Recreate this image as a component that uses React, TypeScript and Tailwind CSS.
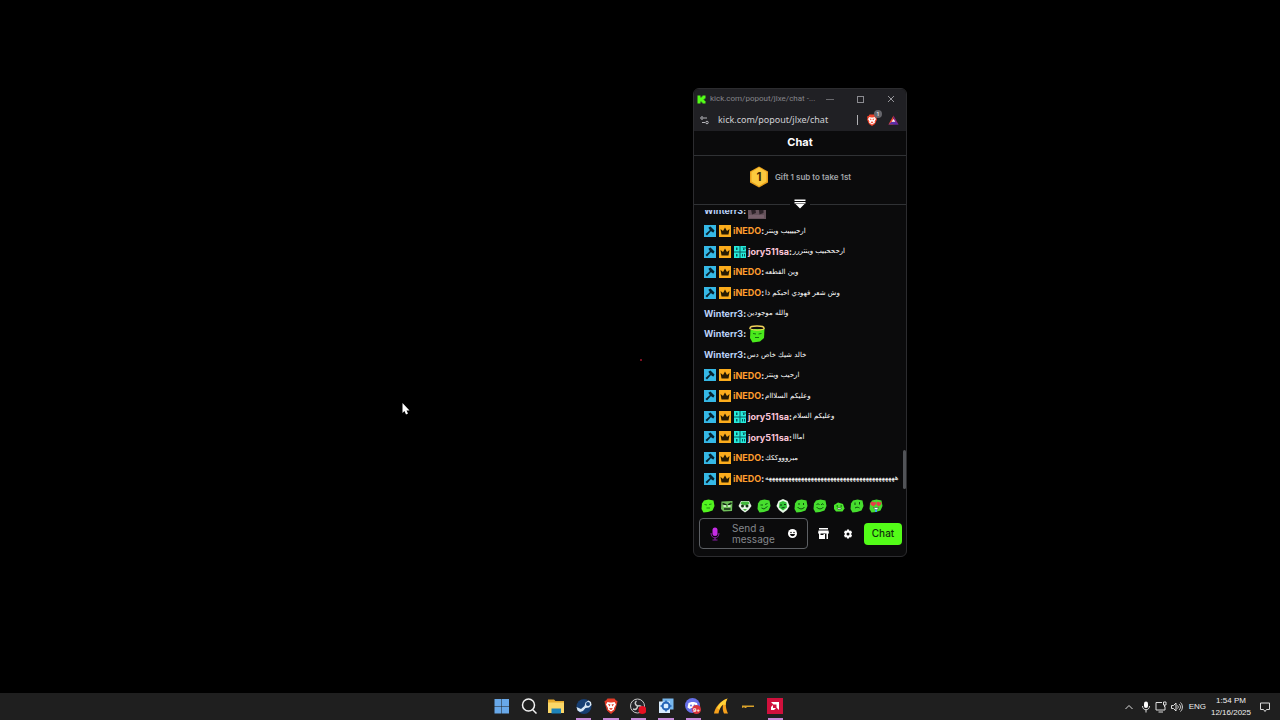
import React, { useState } from 'react';

type Badge = 'mod' | 'vip' | 'og';

type Message = {
  sender: string;
  color: string;
  badges: Badge[];
  text?: string;
  emote?: 'angel' | 'photo';
};

const staff: Badge[] = ['mod', 'vip'];
const staffOg: Badge[] = ['mod', 'vip', 'og'];

const messages: Message[] = [
  { sender: 'Winterr3', color: 'text-[#bcd3fb]', badges: [], emote: 'photo' },
  { sender: 'iNEDO', color: 'text-[#ff9d2e]', badges: staff, text: 'ارحييييب وينتر' },
  { sender: 'jory511sa', color: 'text-[#fbc5d8]', badges: staffOg, text: 'ارحححبيب وينتررر' },
  { sender: 'iNEDO', color: 'text-[#ff9d2e]', badges: staff, text: 'وين القطعه' },
  { sender: 'iNEDO', color: 'text-[#ff9d2e]', badges: staff, text: 'وش شعر فهودي احبكم ذا' },
  { sender: 'Winterr3', color: 'text-[#bcd3fb]', badges: [], text: 'والله موجودين' },
  { sender: 'Winterr3', color: 'text-[#bcd3fb]', badges: [], emote: 'angel' },
  { sender: 'Winterr3', color: 'text-[#bcd3fb]', badges: [], text: 'خالد شيك خاص دس' },
  { sender: 'iNEDO', color: 'text-[#ff9d2e]', badges: staff, text: 'ارحيب وينتر' },
  { sender: 'iNEDO', color: 'text-[#ff9d2e]', badges: staff, text: 'وعليكم السلااام' },
  { sender: 'jory511sa', color: 'text-[#fbc5d8]', badges: staffOg, text: 'وعليكم السلام' },
  { sender: 'jory511sa', color: 'text-[#fbc5d8]', badges: staffOg, text: 'امااا' },
  { sender: 'iNEDO', color: 'text-[#ff9d2e]', badges: staff, text: 'مبروووككك' },
  { sender: 'iNEDO', color: 'text-[#ff9d2e]', badges: staff, text: 'ههههههههههههههههههههههههههههههههههههههههه' },
];

const BadgeIcon: React.FC<{ kind: Badge }> = ({ kind }) => {
  if (kind === 'mod') {
    return (
      <svg viewBox="0 0 24 24" className="w-3 h-3 shrink-0">
        <rect width="24" height="24" fill="#35b8e6" />
        <path d="M9 5l4-2 8 8-2 4-3-1-2-2-8 9-3-3 9-8-2-2z" fill="#06222e" />
      </svg>
    );
  }
  if (kind === 'vip') {
    return (
      <svg viewBox="0 0 24 24" className="w-3 h-3 shrink-0">
        <rect width="24" height="24" fill="#fbac1c" />
        <path d="M3 8l5 4 4-7 4 7 5-4-2 11H5z" fill="#261a02" />
      </svg>
    );
  }
  return (
    <svg viewBox="0 0 24 24" className="w-3 h-3 shrink-0">
      <rect width="24" height="24" fill="#0a5a5c" />
      <path d="M0 0h11v11H0zM13 0h11v11H13zM0 13h11v11H0zM13 13h11v11H13z" fill="#25ebdb" />
      <path d="M4 3h3v5H4zM16 3h8v2h-6v3h3V6M4 16h3v5H4zM16 16h2v5h-2zM20 16h2v5h-2z" fill="#0a5a5c" />
    </svg>
  );
};

type Face = 'calm' | 'angry' | 'ghost' | 'wink' | 'phones' | 'smile' | 'happy' | 'small' | 'think' | 'love';

const faces: Face[] = ['calm', 'angry', 'ghost', 'wink', 'phones', 'smile', 'happy', 'small', 'think', 'love'];

const Emote: React.FC<{ face: Face }> = ({ face }) => (
  <svg viewBox="0 0 28 28" className="w-full h-full">
    {face === 'ghost' && (
      <>
        <path d="M6 4h16l5 10-6 8-7 5-7-5-6-8z" fill="#e9f5e9" />
        <path d="M7 5h14l2 5-9 3-9-3z" fill="#41b83a" />
        <circle cx="9" cy="14" r="3" fill="#123312" />
        <circle cx="18" cy="14" r="3" fill="#123312" />
        <path d="M10 20h8l-4 4z" fill="#41b83a" />
      </>
    )}
    {face === 'phones' && (
      <>
        <path d="M14 0l9 4 4 10-5 8-8 6-8-6-5-8 4-10z" fill="#e6f8e6" />
        <path d="M14 4l7 3 1 10-8 6-8-6 1-10z" fill="#31c336" />
        <path d="M8 12h4M16 11h4M11 18l6-1" stroke="#093b0b" strokeWidth="2" />
      </>
    )}
    {face === 'small' && (
      <>
        <path d="M4 12l8-5 10 3 3 9-4 6H8l-4-5z" fill="#4ae52c" />
        <path d="M9 14h3M17 14h3" stroke="#0b3c0a" strokeWidth="2" />
        <path d="M10 18h9l-2 3h-5z" fill="#fff" stroke="#0b3c0a" />
      </>
    )}
    {face === 'angry' && (
      <>
        <path d="M3 5l22-1-1 20-17 1-5-5z" fill="#6fbf5a" />
        <path d="M5 9l8 3M23 8l-7 4" stroke="#102411" strokeWidth="3" />
        <path d="M7 14h5M16 14h5" stroke="#eefbe9" strokeWidth="3" />
        <path d="M8 20h13" stroke="#102411" strokeWidth="3" />
      </>
    )}
    {['calm', 'wink', 'smile', 'happy', 'think', 'love'].includes(face) && (
      <path d="M6 3l9-2 10 2 2 11-4 9-9 3-9 1-4-7 1-11z" fill={face === 'calm' ? '#52f41f' : '#46de2e'} />
    )}
    {face === 'calm' && <path d="M7 11l5 1M16 11l5-1M11 18h7" stroke="#1a8c0e" strokeWidth="2" fill="none" />}
    {face === 'wink' && (
      <path d="M7 12h5M16 11l5-2M9 18l5 2 7-5" stroke="#0d5b0e" strokeWidth="2" fill="none" />
    )}
    {face === 'smile' && (
      <path d="M10 8v4M19 8v4M7 16c4 5 11 5 14 0" stroke="#0b4b0a" strokeWidth="2" fill="none" />
    )}
    {face === 'happy' && (
      <path d="M7 12l3-3 3 3M16 12l3-3 2 3M7 16c4 5 10 5 14 0" stroke="#0d5b0e" strokeWidth="2" fill="none" />
    )}
    {face === 'think' && (
      <path d="M10 7v5M19 6v5M10 18c3-2 6-2 9 0" stroke="#0b4b0a" strokeWidth="2" fill="none" />
    )}
    {face === 'love' && (
      <>
        <path d="M3 7l4-2 3 2 3-2 1 5-5 5-6-4zM15 7l3-2 3 2 4-1-1 5-5 4-4-4z" fill="#e93a47" />
        <path d="M9 17h10l-3 5-4-1z" fill="#fff" stroke="#333" />
        <path d="M12 21h4v5h-4z" fill="#39a9e8" />
      </>
    )}
  </svg>
);

const MessageEmote: React.FC<{ kind: 'angel' | 'photo' }> = ({ kind }) =>
  kind === 'angel' ? (
    <svg viewBox="0 0 36 36" className="w-[18px] h-[18px] ml-0.5">
      <path d="M5 8h28l-1 18-8 7-15 2-5-9z" fill="#4aea1c" />
      <path d="M4 8C3 3 9 2 18 2s15 1 14 6" fill="none" stroke="#f4d35a" strokeWidth="3" />
      <path d="M5 8c7 3 20 3 27 0" fill="none" stroke="#f4d35a" strokeWidth="2" />
      <path d="M10 17l6 1M21 18l6-1M14 25h8" stroke="#14720c" strokeWidth="2" />
    </svg>
  ) : (
    <svg viewBox="0 0 36 36" className="w-[18px] h-[18px] ml-0.5">
      <rect width="36" height="36" fill="#65525b" />
      <path d="M4 6h9l3 18-8 3zM20 5h11v19l-8 3z" fill="#2c2228" />
      <path d="M2 28h30v6H2z" fill="#77606b" />
    </svg>
  );

const ChatLine: React.FC<{ msg: Message }> = ({ msg }) => (
  <li className="flex items-center whitespace-nowrap text-[9px]">
    {msg.badges.length > 0 && (
      <span className="flex gap-[3px] mr-0.5">
        {msg.badges.map((b) => (
          <BadgeIcon key={b} kind={b} />
        ))}
      </span>
    )}
    <span className={`font-bold ${msg.color}`}>{msg.sender}</span>
    <span className="font-semibold text-white">:</span>
    {msg.text && (
      <span dir="rtl" className="ml-px text-[7px] text-white font-['DejaVu_Sans',sans-serif]">
        {msg.text}
      </span>
    )}
    {msg.emote && <MessageEmote kind={msg.emote} />}
  </li>
);

const BraveIcon: React.FC<{ className: string }> = ({ className }) => (
  <svg viewBox="0 0 24 24" className={className}>
    <path d="M7 1h10l2 3 3 1-1 4 1 2-4 9-6 4-6-4-4-9 1-2-1-4 3-1z" fill="#f1442b" />
    <path d="M7 6l3 1h4l3-1 3 4-3 5 1 2-6 4-6-4 1-2-3-5z" fill="#fff" />
    <path d="M7 9l4 1-1 3zM17 9l-4 1 1 3zM9 16l3-1 3 1-3 3z" fill="#f1442b" />
  </svg>
);

const PopoutWindow = () => {
  const [draft, setDraft] = useState('');

  return (
    <section className="absolute left-[693px] top-[88px] w-[214px] h-[469px] flex flex-col rounded-md border border-[#2c2c2f] bg-[#0b0b0c] overflow-hidden font-['Inter',sans-serif]">
      <header className="shrink-0 bg-[#202024]">
        <div className="h-5 flex items-center pl-[3px] text-[8px] text-[#85858a] font-['Roboto',sans-serif]">
          <svg viewBox="0 0 18 18" className="w-[9px] h-[9px] mr-1 shrink-0">
            <path d="M1 1h6v4h2V3h2V1h6v6h-2v2h-2v1h2v2h2v5h-6v-2H9v-2H7v4H1z" fill="#53fc18" />
          </svg>
          <span className="flex-1 whitespace-nowrap">kick.com/popout/jlxe/chat -...</span>
          <div className="flex">
            <button aria-label="Minimize" className="w-[30px] h-5 flex items-center justify-center">
              <span className="w-2 h-px bg-[#6a6a6e]" />
            </button>
            <button aria-label="Maximize" className="w-[31px] h-5 flex items-center justify-center">
              <span className="w-[7px] h-[7px] border border-[#8b8b90]" />
            </button>
            <button aria-label="Close" className="w-[30px] h-5 flex items-center justify-center">
              <svg viewBox="0 0 8 8" className="w-2 h-2">
                <path d="M1 1l6 6M7 1L1 7" stroke="#96969b" />
              </svg>
            </button>
          </div>
        </div>
        <div className="h-[22px] flex items-center px-1.5 text-[9px] text-[#d0d0d4] font-['Noto_Sans',sans-serif]">
          <svg viewBox="0 0 18 18" className="w-[9px] h-[9px] mr-[9px] shrink-0" fill="none" stroke="#b5b5ba" strokeWidth="2">
            <circle cx="4" cy="4" r="2.5" />
            <path d="M8 4h6M4 13h6" />
            <circle cx="14" cy="13" r="2.5" />
          </svg>
          <span className="flex-1">kick.com/popout/jlxe/chat</span>
          <span className="w-px h-2.5 mr-2 bg-[#b0b0b4]" />
          <span className="relative mr-2.5">
            <BraveIcon className="w-3 h-3" />
            <span className="absolute -top-1 -right-1 w-2 h-2 rounded-full bg-[#66666c] text-[6px] leading-2 text-center text-white">
              1
            </span>
          </span>
          <svg viewBox="0 0 24 22" className="w-[11px] h-2.5 mr-px">
            <path d="M12 1L1 21h11z" fill="#f5482c" />
            <path d="M12 1l11 20H12z" fill="#8a2384" />
            <path d="M1 21h22l-7-6H8z" fill="#5a2fa8" />
            <path d="M12 9l4 6H8z" fill="#fff" />
          </svg>
        </div>
      </header>

      <h1 className="shrink-0 h-[25px] flex items-center justify-center pb-0.5 border-b border-[#303235] text-[11px] font-bold text-white">
        Chat
      </h1>

      <div className="relative shrink-0 h-[49px] flex items-center justify-center gap-1.5 pb-1.5 border-b border-[#303235]">
        <svg viewBox="0 0 40 44" className="w-5 h-[22px]">
          <path d="M20 1l18 10v22L20 43 2 33V11z" fill="#e9a01c" />
          <path d="M20 3l15 9v19l-15 9-15-9V12z" fill="#fbc93e" />
          <text x="20" y="30" textAnchor="middle" fontSize="23" fontWeight="700" fill="#3f2a06">
            1
          </text>
        </svg>
        <span className="text-[8px] font-semibold text-[#a3a6aa]">Gift 1 sub to take 1st</span>
        <button
          aria-label="Expand leaderboard"
          className="absolute -bottom-1.5 left-1/2 -translate-x-1/2 w-5 h-3 flex items-center justify-center bg-[#0b0b0c]"
        >
          <svg viewBox="0 0 24 20" className="w-3 h-2.5" fill="#fff">
            <path d="M1 1h22v3H1zM1 6h22v3H1zM3 10h18l-9 9z" />
          </svg>
        </button>
      </div>

      <div className="flex-1 min-h-0 mt-[5px] relative flex flex-col justify-end overflow-hidden">
        <ul className="shrink-0 h-[289px] grid auto-rows-fr pl-2.5">
          {messages.map((msg, idx) => (
            <ChatLine key={idx} msg={msg} />
          ))}
        </ul>
        <div className="absolute right-0 bottom-0 w-[3px] h-[39px] rounded-sm bg-[#515357]" />
      </div>

      <footer className="shrink-0 pt-2 pl-[5px] pr-1 pb-[7px]">
        <div className="w-[184px] flex justify-between pl-0.5">
          {faces.map((face) => (
            <button key={face} aria-label={face} className="w-3.5 h-[18px] py-0.5">
              <Emote face={face} />
            </button>
          ))}
        </div>
        <form className="mt-[3px] flex items-center" onSubmit={(e) => e.preventDefault()}>
          <div className="w-[109px] h-[31px] flex items-center px-2.5 rounded-sm border border-[#5d6064]">
            <svg viewBox="0 0 20 28" className="w-2.5 h-3.5 mr-3 shrink-0">
              <rect x="5" y="1" width="10" height="17" rx="5" fill="#c72ce6" />
              <path d="M2 12c0 13 16 13 16 0M10 21v5M5 26h10" fill="none" stroke="#8a1fa5" strokeWidth="2" />
            </svg>
            <textarea
              aria-label="Send a message"
              placeholder="Send a message"
              value={draft}
              onChange={(e) => setDraft(e.target.value)}
              rows={2}
              className="flex-1 min-w-0 h-[22px] resize-none overflow-hidden bg-transparent text-[10px] leading-[11px] text-white placeholder:text-[#85888c] outline-none"
            />
            <button type="button" aria-label="Emotes" className="ml-1 shrink-0">
              <svg viewBox="0 0 18 18" className="w-[9px] h-[9px] block">
                <circle cx="9" cy="9" r="9" fill="#fff" />
                <circle cx="6" cy="7" r="1.5" fill="#0b0b0c" />
                <circle cx="12" cy="7" r="1.5" fill="#0b0b0c" />
                <path d="M4 10h10c-1 6-9 6-10 0z" fill="#0b0b0c" />
              </svg>
            </button>
          </div>
          <button type="button" aria-label="Shop" className="ml-2.5">
            <svg viewBox="0 0 22 22" className="w-[11px] h-[11px] block" fill="#fff">
              <path d="M2 0h18v3H2zM1 5h20l1 6H0z" />
              <path d="M2 10h3v4h6v5H5v-5H2zM2 10h3v12H2zM2 19h12v3H2zM11 12h3v10h-3zM17 10h3v12h-3z" />
            </svg>
          </button>
          <button type="button" aria-label="Settings" className="ml-3.5">
            <svg viewBox="0 0 20 20" className="w-2.5 h-2.5 block">
              <path
                d="M8 1h4l1 3 3-1 2 4-2 3 2 3-2 4-3-1-1 3H8l-1-3-3 1-2-4 2-3-2-3 2-4 3 1z"
                fill="#fff"
              />
              <circle cx="10" cy="10" r="3" fill="#0b0b0c" />
            </svg>
          </button>
          <button type="submit" className="ml-auto w-[38px] h-[22px] rounded-sm bg-[#53fc18] text-[10px] font-medium text-[#10300a]">
            Chat
          </button>
        </form>
      </footer>
    </section>
  );
};

type TaskApp = { name: string; running: boolean; icon: React.ReactNode };

const apps: TaskApp[] = [
  {
    name: 'Start',
    running: false,
    icon: <path d="M1 2h14v14H1zM16 2h14v14H16zM1 17h14v14H1zM16 17h14v14H16z" fill="#68a8e8" />,
  },
  {
    name: 'Search',
    running: false,
    icon: (
      <g fill="none" stroke="#f1f1f1" strokeWidth="3">
        <circle cx="15" cy="14" r="12" />
        <path d="M23 23l8 8" />
      </g>
    ),
  },
  {
    name: 'File Explorer',
    running: false,
    icon: (
      <>
        <path d="M0 3h12l3 3h17v21H0z" fill="#e5a92d" />
        <path d="M0 9h32v21H0z" fill="#fbd767" />
        <path d="M7 21h19v10H7z" fill="#1d83b8" />
      </>
    ),
  },
  {
    name: 'Steam',
    running: true,
    icon: (
      <>
        <circle cx="16" cy="17" r="15" fill="#173f73" />
        <path d="M1 18l9 4 7-6 2-7 6-4 5 3 1 6-5 5-7 1-5 6-6 2-5-3z" fill="#d8e7f5" />
        <circle cx="24" cy="12" r="4" fill="#173f73" />
      </>
    ),
  },
  {
    name: 'Brave',
    running: true,
    icon: (
      <>
        <path d="M9 1h14l3 4 3 1-1 6-4 13-8 7-8-7-4-13-1-6 3-1z" fill="#e23b27" />
        <path d="M9 8l5 1h4l5-1 3 5-4 7v3l-6 4-6-4v-3l-4-7z" fill="#fff" />
        <path d="M10 12l5 1-2 4zM22 12l-5 1 2 4zM12 21l4-1 4 1-4 3z" fill="#e23b27" />
      </>
    ),
  },
  {
    name: 'OBS Studio',
    running: true,
    icon: (
      <>
        <circle cx="15" cy="16" r="14" fill="#25252a" stroke="#c9c9c9" strokeWidth="2" />
        <path d="M15 16c-5-2-6-7-2-10M15 16c5-2 9 1 9 5M15 16c0 6-4 8-9 6" fill="none" stroke="#c9c9c9" strokeWidth="3" />
        <circle cx="25" cy="24" r="8" fill="#e81123" />
      </>
    ),
  },
  {
    name: 'Settings Tool',
    running: true,
    icon: (
      <>
        <path d="M9 1h22v22H9z" fill="#78b8ee" />
        <path d="M2 7h22v23H2z" fill="#d9edff" />
        <circle cx="16" cy="16" r="7" fill="none" stroke="#2464b8" strokeWidth="4" />
        <path d="M16 5v6M16 21v6M5 16h6M21 16h6" stroke="#2464b8" strokeWidth="3" />
      </>
    ),
  },
  {
    name: 'Discord',
    running: true,
    icon: (
      <>
        <circle cx="15" cy="15" r="15" fill="#6670e8" />
        <path d="M7 10l6-2h5l6 2 2 9-6 3-2-2h-6l-2 2-5-3z" fill="#fff" />
        <circle cx="12" cy="15" r="2" fill="#6670e8" />
        <circle cx="19" cy="15" r="2" fill="#6670e8" />
        <circle cx="23" cy="23" r="9" fill="#d9343f" />
        <text x="23" y="28" textAnchor="middle" fontSize="12" fontWeight="700" fill="#fff">
          9+
        </text>
      </>
    ),
  },
  {
    name: 'Fin',
    running: false,
    icon: (
      <>
        <path d="M2 31c2-12 12-25 27-30-5 8-4 20 1 30h-8c-3-6-3-12-2-18-5 5-8 11-9 18z" fill="#f5a01c" />
        <path d="M8 20C13 10 20 4 29 1c-3 5-4 9-4 13l-5-1c-4 3-6 6-7 10z" fill="#ffd33a" />
      </>
    ),
  },
  {
    name: 'Rifle',
    running: false,
    icon: <path d="M4 15h24v3H14l-2 2H9v-2l-5 2z" fill="#d9a12a" />,
  },
  {
    name: 'AMD Software',
    running: true,
    icon: (
      <>
        <path d="M0 0h32v32H0z" fill="#d0103c" />
        <path d="M8 8h16v16l-5-5v-6h-6z" fill="#fff" />
        <path d="M12 14v6h6l-4 4H8v-6z" fill="#fff" />
      </>
    ),
  },
];

const Taskbar = () => (
  <footer className="relative h-[27px] flex items-stretch justify-end bg-[#1f1f1f] text-[#eeeeee] font-['Liberation_Sans',sans-serif]">
    <nav className="absolute inset-y-0 left-1/2 -translate-x-1/2 w-[304px] pr-[3px] flex">
      {apps.map((app) => (
        <button key={app.name} aria-label={app.name} className="relative flex-1 flex items-center justify-center pb-px">
          <svg viewBox="0 0 32 32" className="w-4 h-4">
            {app.icon}
          </svg>
          {app.running && <span className="absolute bottom-0 inset-x-1.5 h-0.5 bg-[#c58ad8]" />}
        </button>
      ))}
    </nav>
    <div className="flex items-center gap-1 pr-2.5 text-[8px]">
      <svg viewBox="0 0 16 16" className="w-2 h-2 mr-1" fill="none" stroke="#dddddd" strokeWidth="2">
        <path d="M1 12l7-7 7 7" />
      </svg>
      <svg viewBox="0 0 20 24" className="w-2.5 h-3">
        <rect x="6" y="1" width="8" height="13" rx="4" fill="#fff" />
        <path d="M3 10c0 10 14 10 14 0M10 18v5" fill="none" stroke="#ddd" strokeWidth="2" />
      </svg>
      <svg viewBox="0 0 24 24" className="w-3 h-3" fill="none" stroke="#ddd" strokeWidth="2">
        <path d="M14 3H2v15h18v-7M7 22h9M17 2h5v6h-5zM19 8v4" />
      </svg>
      <svg viewBox="0 0 24 24" className="w-3 h-3" fill="none" stroke="#ddd" strokeWidth="2">
        <path d="M1 9h4l5-5v16l-5-5H1zM13 9c2 2 2 4 0 6M16 6c4 4 4 8 0 12M19 3c5 5 5 13 0 18" />
      </svg>
      <span className="ml-0.5">ENG</span>
      <time className="w-[42px] text-center leading-3" dateTime="2025-12-16T13:54">
        1:54 PM
        <br />
        12/16/2025
      </time>
      <svg viewBox="0 0 20 20" className="w-2.5 h-2.5 ml-1" fill="none" stroke="#ddd" strokeWidth="2">
        <path d="M1 2h18v13h-6l-3 4-3-4H1z" />
      </svg>
    </div>
  </footer>
);

const App = () => (
  <div className="relative min-h-screen flex flex-col bg-black overflow-hidden">
    <main className="flex-1">
      <PopoutWindow />
      <span className="absolute left-[640px] top-[359px] w-0.5 h-0.5 bg-[#7a1020]" />
      <svg viewBox="0 0 16 24" className="absolute left-[402px] top-[403px] w-2 h-3">
        <path d="M1 0v20l4-4 3 7 4-2-3-6h6z" fill="#fff" />
      </svg>
    </main>
    <Taskbar />
  </div>
);

export default App;
